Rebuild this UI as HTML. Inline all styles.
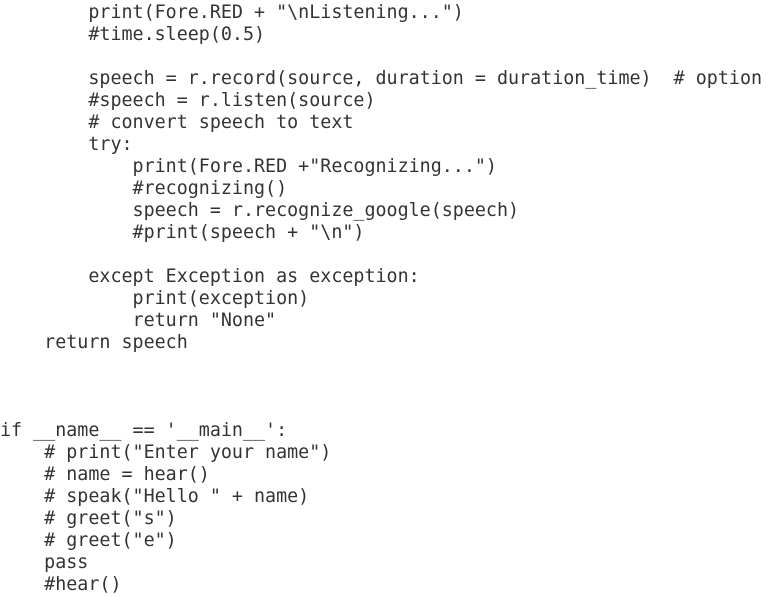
<!DOCTYPE html>
<html><head><meta charset="utf-8"><style>
html,body{margin:0;padding:0;background:#fff;width:782px;height:597px;overflow:hidden}
pre{margin:0;padding:2px 0 0 0;font-family:"DejaVu Sans Mono","Liberation Mono",monospace;font-size:18.35px;line-height:22px;color:#333;white-space:pre}
</style></head><body><pre>        print(Fore.RED + "\nListening...")
        #time.sleep(0.5)

        speech = r.record(source, duration = duration_time)  # option
        #speech = r.listen(source)
        # convert speech to text
        try:
            print(Fore.RED +"Recognizing...")
            #recognizing()
            speech = r.recognize_google(speech)
            #print(speech + "\n")

        except Exception as exception:
            print(exception)
            return "None"
    return speech



if __name__ == '__main__':
    # print("Enter your name")
    # name = hear()
    # speak("Hello " + name)
    # greet("s")
    # greet("e")
    pass
    #hear()
</pre></body></html>
